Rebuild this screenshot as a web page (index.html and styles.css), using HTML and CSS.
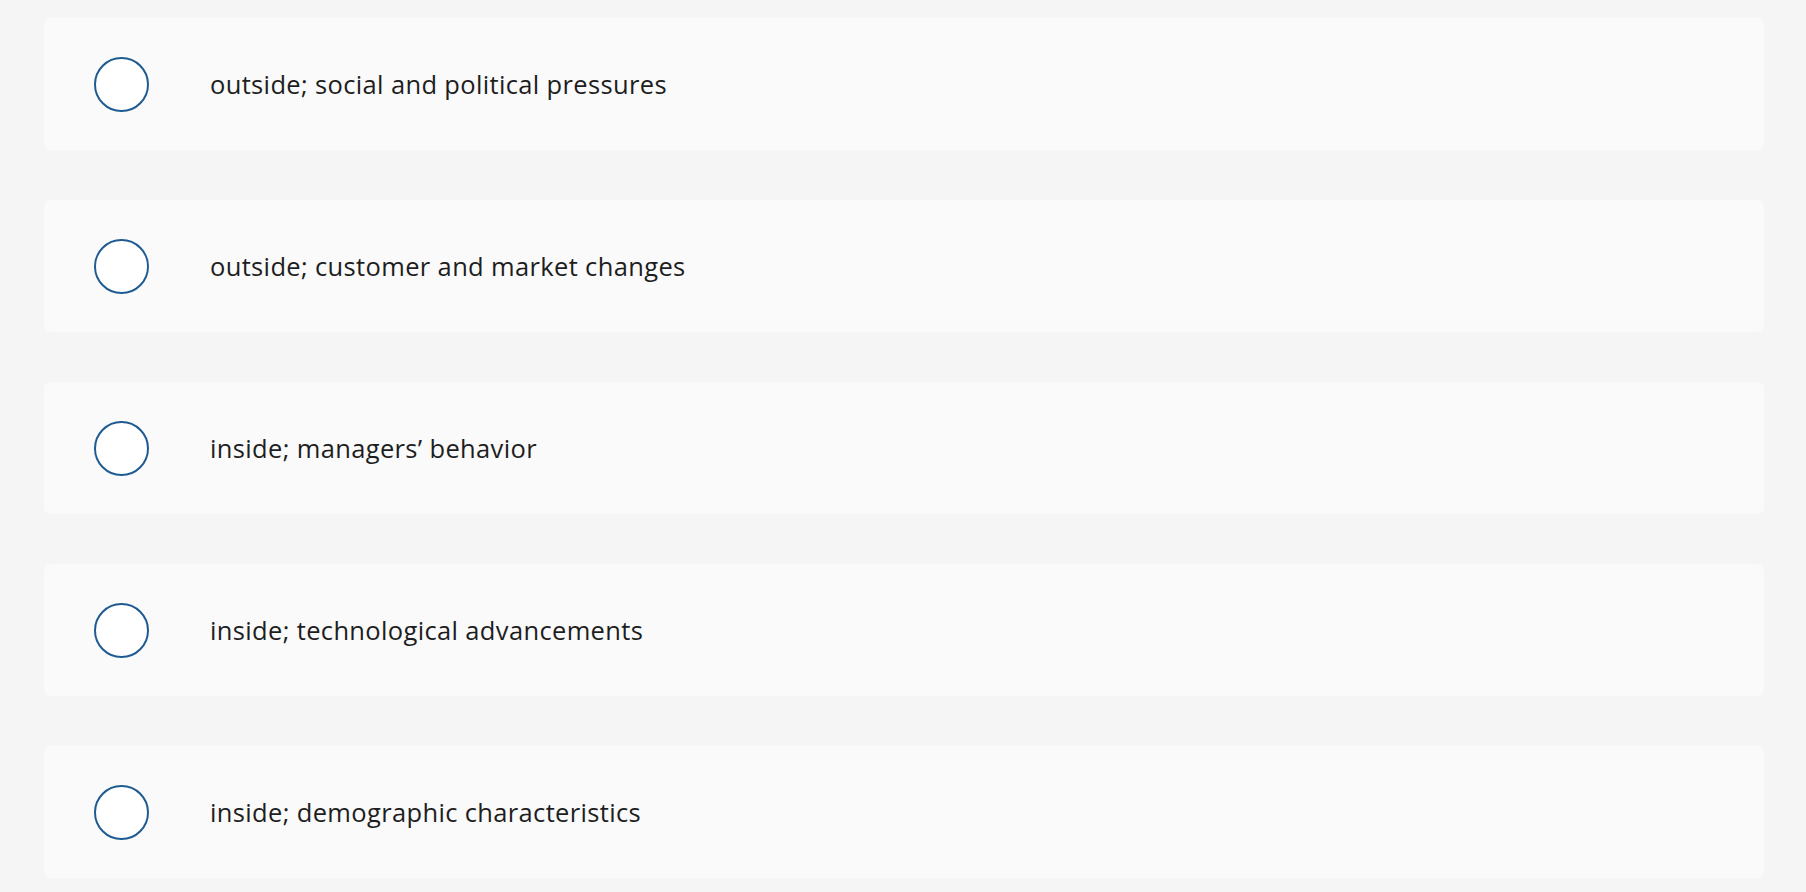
FILE: index.html
```html
<!DOCTYPE html>
<html lang="en">
<head>
<meta charset="utf-8">
<title>Choices</title>
<link rel="stylesheet" href="styles.css">
</head>
<body>
<div class="choices">
  <label class="choice"><span class="radio"></span><span class="text">outside; social and political pressures</span></label>
  <label class="choice"><span class="radio"></span><span class="text">outside; customer and market changes</span></label>
  <label class="choice"><span class="radio"></span><span class="text">inside; managers’ behavior</span></label>
  <label class="choice"><span class="radio"></span><span class="text">inside; technological advancements</span></label>
  <label class="choice"><span class="radio"></span><span class="text">inside; demographic characteristics</span></label>
</div>
</body>
</html>
```
FILE: styles.css
```css
html, body {
  margin: 0;
  padding: 0;
  background: #f5f5f5;
}
body {
  font-family: "Open Sans", "Liberation Sans", sans-serif;
  color: #1e1e1e;
}
.choices {
  display: flex;
  flex-direction: column;
  gap: 50px;
  padding: 18px 42px 0 44px;
}
.choice {
  display: flex;
  align-items: center;
  height: 132px;
  padding-left: 50px;
  background: #fafafa;
  border-radius: 6px;
  box-sizing: border-box;
}
.radio {
  width: 55px;
  height: 55px;
  box-sizing: border-box;
  border: 2px solid #1f5b91;
  border-radius: 50%;
  background: #fff;
  flex: none;
}
.text {
  margin-left: 61px;
  font-size: 25.5px;
  letter-spacing: 0.35px;
}
```
